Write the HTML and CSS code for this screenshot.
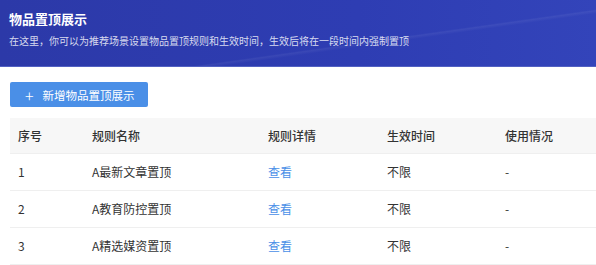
FILE: index.html
```html
<!DOCTYPE html>
<html lang="zh-CN">
<head>
  <meta charset="UTF-8" />
  <title>物品置顶展示</title>
  <link rel="stylesheet" href="styles.css">
</head>
<body>
  <div class="banner">
    <div class="banner-title">物品置顶展示</div>
    <div class="banner-desc">在这里，你可以为推荐场景设置物品置顶规则和生效时间，生效后将在一段时间内强制置顶</div>
  </div>

  <div class="content">
    <button class="add-btn"><span class="plus">+</span>新增物品置顶展示</button>

    <table class="rules">
      <colgroup>
        <col style="width: 74px">
        <col style="width: 176px">
        <col style="width: 119px">
        <col style="width: 118px">
        <col>
      </colgroup>
      <thead>
        <tr>
          <th>序号</th>
          <th>规则名称</th>
          <th>规则详情</th>
          <th>生效时间</th>
          <th>使用情况</th>
        </tr>
      </thead>
      <tbody>
        <tr>
          <td>1</td>
          <td>A最新文章置顶</td>
          <td><a class="link" href="#">查看</a></td>
          <td>不限</td>
          <td>-</td>
        </tr>
        <tr>
          <td>2</td>
          <td>A教育防控置顶</td>
          <td><a class="link" href="#">查看</a></td>
          <td>不限</td>
          <td>-</td>
        </tr>
        <tr>
          <td>3</td>
          <td>A精选媒资置顶</td>
          <td><a class="link" href="#">查看</a></td>
          <td>不限</td>
          <td>-</td>
        </tr>
      </tbody>
    </table>
  </div>
</body>
</html>
```

FILE: styles.css
```css
* {
  box-sizing: border-box;
}
body {
  margin: 0;
  font-family: "Noto Sans CJK SC", "Noto Sans", sans-serif;
  background: #fff;
  color: #333;
}

.banner {
  height: 67px;
  padding: 9px 9px 0 9px;
  color: #fff;
  background:
    linear-gradient(172deg, transparent 62%, rgba(255, 255, 255, 0.06) 63%, transparent 65%),
    linear-gradient(90deg, #2c39a8 0%, #2e3db3 60%, #3344ba 100%);
  border-bottom: 1px solid #5261c2;
}
.banner-title {
  font-size: 13px;
  font-weight: 700;
  line-height: 20px;
}
.banner-desc {
  margin-top: 4px;
  font-size: 10px;
  line-height: 16px;
  color: rgba(255, 255, 255, 0.82);
}

.content {
  padding: 15px 0 0 10px;
}

.add-btn {
  display: flex;
  align-items: center;
  height: 25px;
  width: 138px;
  padding: 0 0 0 15px;
  border: none;
  border-radius: 2px;
  background: #4a8fe7;
  color: #fff;
  font-family: inherit;
  font-size: 11.5px;
  cursor: pointer;
}
.add-btn .plus {
  font-size: 16px;
  font-weight: 300;
  margin-right: 9px;
  line-height: 1;
}

.rules {
  margin-top: 11px;
  width: 100%;
  border-collapse: collapse;
  table-layout: fixed;
  font-size: 12px;
}
.rules th {
  height: 35px;
  padding: 0 8px;
  text-align: left;
  font-weight: 500;
  color: #333;
  background: #f7f7f7;
  border-bottom: 1px solid #efefef;
}
.rules td {
  height: 37px;
  padding: 0 8px;
  color: #333;
  border-bottom: 1px solid #efefef;
}
.link {
  color: #4a8fe7;
  text-decoration: none;
}
```
